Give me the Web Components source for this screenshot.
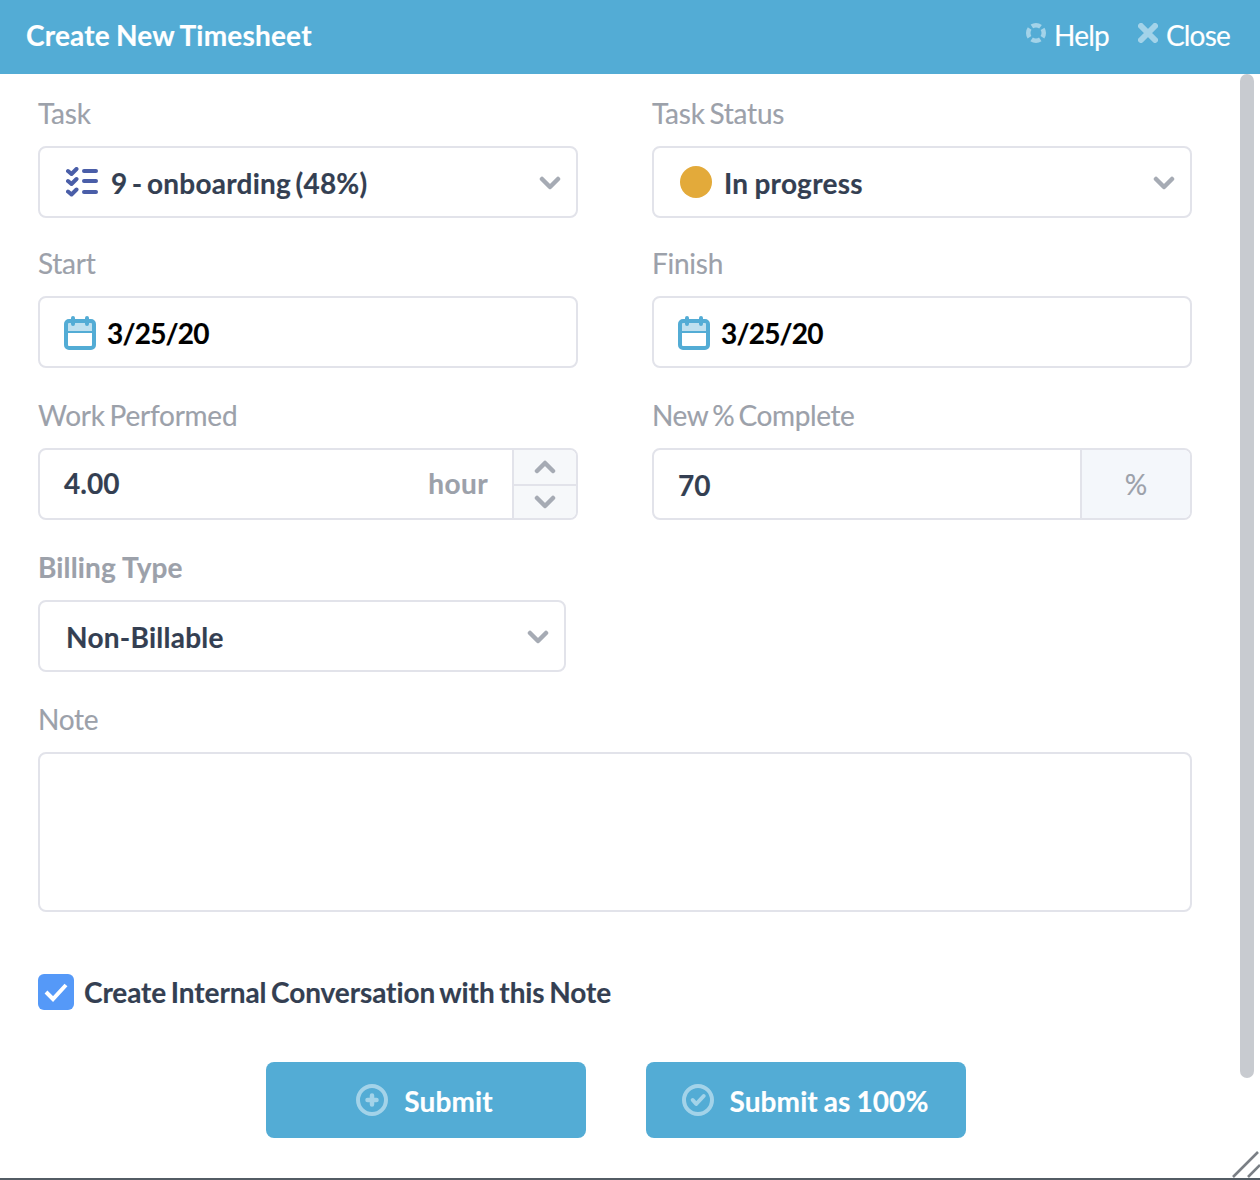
<!DOCTYPE html>
<html lang="en"><head><meta charset="utf-8"><title>Create New Timesheet</title>
<style>
html,body{margin:0;padding:0;background:#fff;}
body{font-family:Lato,"Liberation Sans",sans-serif;font-size:28px;width:1260px;height:1180px;overflow:hidden;-webkit-text-stroke:.15px;}
</style></head><body>
<ts-dialog>
  <span slot="title">Create New Timesheet</span>
  <ts-link slot="actions" icon="help">Help</ts-link>
  <ts-link slot="actions" icon="close">Close</ts-link>

  <ts-row>
    <ts-field label="Task"><ts-select><svg slot="icon" width="32" height="30" viewBox="0 0 32 30" fill="none" stroke="#4a5ea8" stroke-linecap="round" stroke-linejoin="round"><g stroke-width="4"><path d="M2 4l3.500 3L10.500 2"/><path d="M2 14l3.500 3L10.500 12"/><path d="M2 24.500l3.500 3L10.500 22.500"/></g><g stroke-width="4"><path d="M18 4h12M18 14h12M18 25h12"/></g></svg><span style="margin-left:13px;word-spacing:-2.7px">9 - onboarding (48%)</span></ts-select></ts-field>
    <ts-field label="Task Status"><ts-select><span slot="icon" style="display:block;width:32px;height:32px;border-radius:50%;background:#e3aa3a"></span><span style="margin-left:12px;word-spacing:-1px">In progress</span></ts-select></ts-field>
  </ts-row>
  <ts-row>
    <ts-field label="Start"><ts-date>3/25/20</ts-date></ts-field>
    <ts-field label="Finish"><ts-date>3/25/20</ts-date></ts-field>
  </ts-row>
  <ts-row>
    <ts-field label="Work Performed"><ts-hours value="4.00" unit="hour"></ts-hours></ts-field>
    <ts-field label="New % Complete" tight><ts-percent value="70"></ts-percent></ts-field>
  </ts-row>
  <ts-row>
    <ts-field label="Billing Type" strong style="width:528px"><ts-select plain>Non-Billable</ts-select></ts-field>
  </ts-row>
  <ts-row one>
    <ts-field label="Note"><ts-note></ts-note></ts-field>
  </ts-row>
  <ts-check>Create Internal Conversation with this Note</ts-check>
  <ts-actions>
    <ts-button icon="plus" style="padding-right:3px">Submit</ts-button>
    <ts-button icon="check" style="padding-right:2px;word-spacing:-1px">Submit as 100%</ts-button>
  </ts-actions>
</ts-dialog>
<script>
const chevron = d => `<svg width="22" height="14" viewBox="0 0 22 14" fill="none" stroke="#a6abb4" stroke-width="4.500" stroke-linecap="round" stroke-linejoin="round"><path d="${d}"/></svg>`;
const DOWN = 'M3 3l8 8 8-8', UP = 'M3 11l8-8 8 8';
function def(name, html){
  customElements.define(name, class extends HTMLElement{
    connectedCallback(){
      if(this.shadowRoot) return;
      const a = n => this.getAttribute(n);
      this.attachShadow({mode:'open'}).innerHTML = typeof html === 'function' ? html(a) : html;
    }
  });
}
def('ts-dialog', `<style>
:host{display:block;width:1260px;height:1180px;position:relative;box-sizing:border-box;border-bottom:2px solid #535c64;overflow:hidden;color:#343f52}
header{box-sizing:border-box;height:74px;background:#53acd5;display:flex;align-items:center;padding:0 30px 4px 26px;color:#fff}
.t{font-weight:700;font-size:28px;flex:1;letter-spacing:.2px;word-spacing:-1px}
.acts{display:flex;gap:29px}
main{padding:20px 68px 0 38px;display:block}
.thumb{position:absolute;left:1240px;top:74px;width:14px;height:1004px;border-radius:7px;background:#c8cbd0}
.grip{position:absolute;right:0;bottom:0}
</style><header><div class="t"><slot name="title"></slot></div><div class="acts"><slot name="actions"></slot></div></header><main><slot></slot></main><div class="thumb"></div>
<svg class="grip" width="28" height="28" viewBox="0 0 28 28" stroke="#7a7f85" stroke-width="2.600" fill="none"><path d="M1 27L26 2M16 27L28 15"/></svg>`);
def('ts-link', a => `<style>:host{display:inline-flex;align-items:center;gap:8px;font-size:28px;color:#fff;letter-spacing:-.8px;margin-right:0}svg{display:block;margin-bottom:4px}</style>` +
 (a('icon')==='help'
 ? `<svg width="20" height="20" viewBox="0 0 20 20" fill="none" stroke="#a3d3e9" stroke-width="4.500"><circle cx="10" cy="10" r="7.750" stroke-dasharray="9.170 3" stroke-dashoffset="4.585"/></svg>`
 : `<svg width="20" height="20" viewBox="0 0 20 20" fill="none" stroke="#a3d3e9" stroke-width="6" stroke-linecap="round"><path d="M3 3l14 14M17 3L3 17"/></svg>`) + `<slot></slot>`);
def('ts-row', `<style>
:host{display:block;margin-bottom:28px}
:host(:first-of-type){margin-bottom:26px}
.g{display:grid;grid-template-columns:540px 540px;column-gap:74px}
:host([one]) .g{grid-template-columns:1154px}</style><div class="g"><slot></slot></div>`);
def('ts-field', a => { const s = a('strong')!==null, t = a('tight')!==null; return `<style>:host{display:block}
label{display:block;height:40px;line-height:39px;margin-bottom:12px;color:#9ca1aa;font-size:28px;letter-spacing:${s?'.15px':t?'-.4px':'-.25px'};word-spacing:${s?'0':t?'-2.4px':'-2px'};font-weight:${s?700:400}}</style><label>${a('label')}</label><slot></slot>`; });
const box = `:host{display:flex;align-items:center;box-sizing:border-box;height:72px;border:2px solid #e2e3ea;border-radius:8px;background:#fff;font-size:28px;}`;
def('ts-select', a => `<style>${box}
:host{padding:0 15px 0 26px;font-weight:700;color:#343f52;letter-spacing:.25px}
.l{flex:1;display:flex;align-items:center;padding-top:2px}::slotted(svg){display:block}
.i{display:flex}.c{display:flex;padding-top:2px}</style><div class="i"><slot name="icon"></slot></div><div class="l"><slot></slot></div><div class="c">${chevron(DOWN)}</div>`);
def('ts-date', `<style>${box}
:host{padding:2px 0 0 24px;font-weight:700;color:#000;gap:11px;letter-spacing:-.8px}svg{display:block}</style>
<svg width="32" height="34" viewBox="0 0 32 34" fill="none" stroke="#53acd5"><rect x="2" y="7" width="28" height="9" fill="#bfe0ef" stroke="none"/><rect x="2" y="5" width="28" height="27" rx="3" stroke-width="4"/><path d="M2 16h28" stroke-width="2"/><path d="M9 2v6M23 2v6" stroke-width="4" stroke-linecap="round"/></svg><slot></slot>`);
def('ts-hours', a => `<style>${box}
:host{padding-left:24px;font-weight:700;color:#343f52;overflow:hidden}
.v{flex:1;margin-bottom:2px}.u{color:#9ca1aa;margin-right:24px;letter-spacing:.4px;margin-bottom:2px}
.s{width:62px;align-self:stretch;border-left:2px solid #e2e3ea;background:#f6f8fa;display:grid;grid-template-rows:1fr 1fr}
.s div{display:flex;align-items:center;justify-content:center}.s div+div{border-top:2px solid #e2e3ea}</style>
<div class="v">${a('value')}</div><div class="u">${a('unit')}</div><div class="s"><div>${chevron(UP)}</div><div>${chevron(DOWN)}</div></div>`);
def('ts-percent', a => `<style>${box}
:host{padding-left:24px;font-weight:700;color:#343f52;overflow:hidden}
.v{flex:1;padding-top:2px}.p{width:108px;align-self:stretch;border-left:2px solid #e2e3ea;background:#f4f7fb;color:#9ca1aa;font-weight:400;display:flex;align-items:center;justify-content:center}</style>
<div class="v">${a('value')}</div><div class="p">%</div>`);
def('ts-note', `<style>:host{display:block;box-sizing:border-box;height:160px;border:2px solid #e2e3ea;border-radius:8px}</style>`);
def('ts-check', `<style>:host{display:flex;align-items:center;gap:10px;margin-top:62px;font-weight:700;font-size:28px;color:#343f52;word-spacing:-2px;letter-spacing:-.1px}
.b{width:36px;height:36px;border-radius:6px;background:#5599f8;display:flex;align-items:center;justify-content:center}svg{display:block}span{margin-bottom:1px}</style>
<div class="b"><svg width="24" height="20" viewBox="0 0 24 20" fill="none" stroke="#fff" stroke-width="4"><path d="M2 10l7 7L22 3"/></svg></div><span><slot></slot></span>`);
def('ts-actions', `<style>:host{display:flex;justify-content:center;gap:60px;margin-top:52px;padding-left:2px}</style><slot></slot>`);
def('ts-button', a => `<style>:host{box-sizing:border-box;display:flex;align-items:center;justify-content:center;gap:16px;width:320px;height:76px;border-radius:8px;background:#53acd5;color:#fff;font-weight:700;font-size:28px;letter-spacing:.1px}svg{display:block}span{margin-top:2px}</style>
<svg width="32" height="32" viewBox="0 0 32 32" fill="none" stroke="#a3d3e9"><circle cx="16" cy="16" r="14" stroke-width="4"/>${a('icon')==='plus'
?'<path d="M16 11.500v9M11.500 16h9" stroke-width="4.500" stroke-linecap="round"/>'
:'<path d="M10.700 16l3.500 4 7.500-8" stroke-width="4" stroke-linecap="round" stroke-linejoin="round"/>'}</svg><span><slot></slot></span>`);
</script>
</body></html>
